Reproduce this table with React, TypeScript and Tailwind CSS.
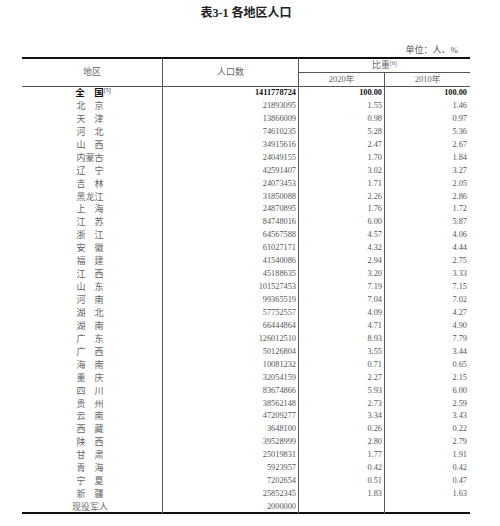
import React from 'react'

type Row = [string, string, string, string]

const rows: Row[] = [
  ['北　京', '21893095', '1.55', '1.46'],
  ['天　津', '13866009', '0.98', '0.97'],
  ['河　北', '74610235', '5.28', '5.36'],
  ['山　西', '34915616', '2.47', '2.67'],
  ['内蒙古', '24049155', '1.70', '1.84'],
  ['辽　宁', '42591407', '3.02', '3.27'],
  ['吉　林', '24073453', '1.71', '2.05'],
  ['黑龙江', '31850088', '2.26', '2.86'],
  ['上　海', '24870895', '1.76', '1.72'],
  ['江　苏', '84748016', '6.00', '5.87'],
  ['浙　江', '64567588', '4.57', '4.06'],
  ['安　徽', '61027171', '4.32', '4.44'],
  ['福　建', '41540086', '2.94', '2.75'],
  ['江　西', '45188635', '3.20', '3.33'],
  ['山　东', '101527453', '7.19', '7.15'],
  ['河　南', '99365519', '7.04', '7.02'],
  ['湖　北', '57752557', '4.09', '4.27'],
  ['湖　南', '66444864', '4.71', '4.90'],
  ['广　东', '126012510', '8.93', '7.79'],
  ['广　西', '50126804', '3.55', '3.44'],
  ['海　南', '10081232', '0.71', '0.65'],
  ['重　庆', '32054159', '2.27', '2.15'],
  ['四　川', '83674866', '5.93', '6.00'],
  ['贵　州', '38562148', '2.73', '2.59'],
  ['云　南', '47209277', '3.34', '3.43'],
  ['西　藏', '3648100', '0.26', '0.22'],
  ['陕　西', '39528999', '2.80', '2.79'],
  ['甘　肃', '25019831', '1.77', '1.91'],
  ['青　海', '5923957', '0.42', '0.42'],
  ['宁　夏', '7202654', '0.51', '0.47'],
  ['新　疆', '25852345', '1.83', '1.63'],
  ['现役军人', '2000000', '', ''],
]

const grid = 'grid grid-cols-[141px_136px_86px_85px]'

function DataRow({ row, last }: { row: Row; last: boolean }) {
  return (
    <div className={`${grid} h-[12.95px] leading-[12.95px] ${last ? 'border-b-2 border-[#111]' : ''}`}>
      <div className="border-r border-[#555] text-center pr-[4px] text-[9px] text-[#666]">{row[0]}</div>
      <div className="border-r border-[#555] text-right pr-[2px] text-[8.3px] text-[#555]">{row[1]}</div>
      <div className="border-r border-[#555] text-right pr-[2px] text-[8.3px] text-[#555]">{row[2]}</div>
      <div className="text-right pr-[3px] text-[8.3px] text-[#555]">{row[3]}</div>
    </div>
  )
}

export default function App() {
  return (
    <div className="w-[500px] h-[526px] bg-white overflow-hidden font-['Liberation_Serif','Noto_Sans_CJK_SC',serif]">
      <div className="ml-[22px] w-[448px]">
        <h1 className="pt-[6px] h-[20px] text-center text-[12px] leading-[14px] font-bold text-[#222]">
          表3-1 各地区人口
        </h1>
        <div className="mt-[24px] h-[13px] text-right pr-[12px] text-[9px] leading-[13px] text-[#555]">
          单位：人、%
        </div>
        <div className="border-t-2 border-[#111]">
          <div className={`${grid} grid-rows-[14px_13px] border-b border-[#555] text-[9px] text-[#666]`}>
            <div className="row-span-2 border-r border-[#555] flex items-center justify-center">地区</div>
            <div className="row-span-2 border-r border-[#555] flex items-center justify-center">人口数</div>
            <div className="col-span-2 border-b border-[#555] flex items-center justify-center leading-none">
              比重<sup className="text-[6px] -top-[3px]">[6]</sup>
            </div>
            <div className="border-r border-[#555] flex items-center justify-center text-[8.5px]">2020年</div>
            <div className="flex items-center justify-center text-[8.5px]">2010年</div>
          </div>
          <div className={`${grid} h-[12.95px] leading-[12.95px] font-bold text-[#111]`}>
            <div className="border-r border-[#555] text-center pl-[2px] text-[9.5px]">
              全　国<sup className="text-[6px] font-normal -top-[4px]">[5]</sup>
            </div>
            <div className="border-r border-[#555] text-right pr-[2px] text-[8.3px]">1411778724</div>
            <div className="border-r border-[#555] text-right pr-[2px] text-[8.3px]">100.00</div>
            <div className="text-right pr-[3px] text-[8.3px]">100.00</div>
          </div>
          {rows.map((r, i) => (
            <DataRow key={r[0]} row={r} last={i === rows.length - 1} />
          ))}
        </div>
      </div>
    </div>
  )
}
